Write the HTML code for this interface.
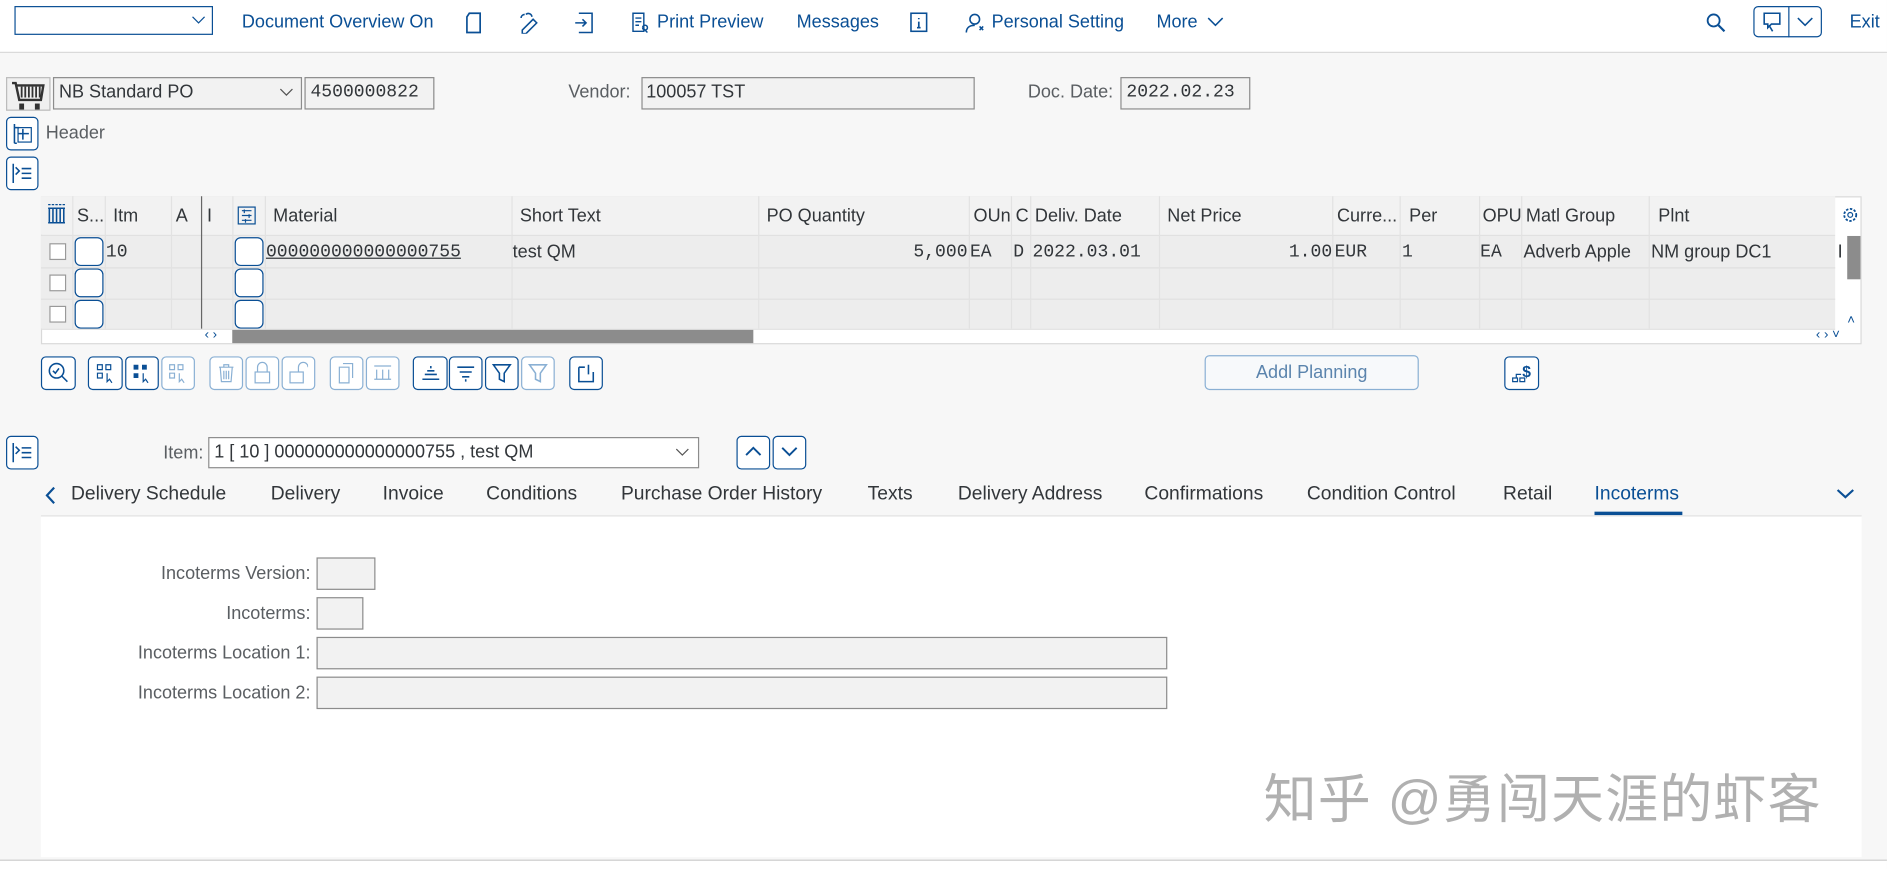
<!DOCTYPE html>
<html><head><meta charset="utf-8"><style>
html,body{margin:0;padding:0;width:1887px;height:868px;overflow:hidden;background:#f7f7f7;}
#w{position:absolute;left:0;top:0;width:1568px;height:721px;transform:scale(1.2034,1.2039);transform-origin:0 0;font-family:"Liberation Sans",sans-serif;font-size:15px;color:#32363a;}
.a{position:absolute;}
.lnk{color:#0a4f95;font-size:15px;}
.btn{position:absolute;border:1px solid #0a4f95;border-radius:4px;background:#fff;box-sizing:border-box;height:28px;}
.btnd{border-color:#8ab0d4;}
.fld{position:absolute;background:#f2f2f2;border:1px solid #8c8c8c;box-sizing:border-box;height:27px;}
.mono{font-family:"Liberation Mono",monospace;}
.lbl{position:absolute;color:#5a5e62;text-align:right;}
.th{position:absolute;top:171px;font-size:15px;}
.vl{position:absolute;top:163px;height:110px;border-left:1px solid #e2e2e2;}
.hl{position:absolute;left:34px;width:1491px;border-top:1px solid #e0e0e0;}
.cb{position:absolute;width:12px;height:12px;border:1px solid #999;background:#fff;left:41px;}
.sb{position:absolute;width:22px;height:22px;border:1px solid #0a4f95;border-radius:5px;background:#fff;}
.tab{position:absolute;top:402px;font-size:16px;color:#32363a;}
svg{position:absolute;}
</style></head><body><div id="w">
<!-- top bar -->
<div class="a" style="left:0;top:0;width:1568px;height:43px;background:#fff;border-bottom:1px solid #d9d9d9"></div>
<div class="a" style="left:12px;top:5px;width:165px;height:24px;border:1px solid #0a4f95;box-sizing:border-box;background:#fff"></div>
<svg style="left:159px;top:13px" width="12" height="8"><path d="M1 1l5 5 5-5" stroke="#0a4f95" fill="none"/></svg>
<div class="a lnk" style="left:201px;top:10px">Document Overview On</div>
<svg style="left:387px;top:10px" width="14" height="18"><path d="M3 1h9v16H1V4z" stroke="#0a4f95" fill="none" stroke-width="1.4"/></svg>
<svg style="left:431px;top:10px" width="18" height="18"><path d="M3 15l9-9 3 3-9 9H3zM6 2a3 3 0 0 1 5 2M2 5a3 3 0 0 1 3-3" stroke="#0a4f95" fill="none" stroke-width="1.3"/></svg>
<svg style="left:477px;top:10px" width="18" height="18"><path d="M4 1h11v16H4M1 9h9M7 6l3 3-3 3" stroke="#0a4f95" fill="none" stroke-width="1.3"/></svg>
<svg style="left:524px;top:10px" width="16" height="18"><path d="M2 1h9v15H2zM4 5h5M4 8h5M4 11h3M10 13a2 2 0 1 0 0-.1M11 14l3 3" stroke="#0a4f95" fill="none" stroke-width="1.2"/></svg>
<div class="a lnk" style="left:546px;top:10px">Print Preview</div>
<div class="a lnk" style="left:662px;top:10px">Messages</div>
<svg style="left:756px;top:10px" width="16" height="18"><rect x="1" y="1" width="13" height="15" stroke="#0a4f95" fill="none" stroke-width="1.3"/><path d="M7.5 5v1M7.5 8v5M6 13h3" stroke="#0a4f95" stroke-width="1.4"/></svg>
<svg style="left:801px;top:10px" width="20" height="18"><circle cx="9" cy="6" r="4" stroke="#0a4f95" fill="none" stroke-width="1.3"/><path d="M2 17c0-5 4-6 7-6M13 12l3 3M16 12l-3 3" stroke="#0a4f95" fill="none" stroke-width="1.3"/></svg>
<div class="a lnk" style="left:824px;top:10px">Personal Setting</div>
<div class="a lnk" style="left:961px;top:10px">More</div>
<svg style="left:1003px;top:14px" width="14" height="9"><path d="M1 1l6 6 6-6" stroke="#0a4f95" fill="none" stroke-width="1.3"/></svg>
<svg style="left:1417px;top:10px" width="18" height="18"><circle cx="7" cy="7" r="5" stroke="#0a4f95" fill="none" stroke-width="1.5"/><path d="M11 11l5 5" stroke="#0a4f95" stroke-width="1.8"/></svg>
<div class="a" style="left:1457px;top:5px;width:57px;height:26px;border:1px solid #0a4f95;border-radius:4px;box-sizing:border-box"></div>
<div class="a" style="left:1486px;top:5px;height:26px;border-left:1px solid #0a4f95"></div>
<svg style="left:1464px;top:9px" width="18" height="18"><path d="M2 2h13v9H8l-3 3v-3H2z" stroke="#0a4f95" fill="none" stroke-width="1.3"/><path d="M6 12l3 5" stroke="#0a4f95" stroke-width="1.3"/></svg>
<svg style="left:1493px;top:14px" width="14" height="9"><path d="M1 1l6 6 6-6" stroke="#0a4f95" fill="none" stroke-width="1.3"/></svg>
<div class="a lnk" style="left:1537px;top:10px">Exit</div>

<!-- header row -->
<div class="a" style="left:5px;top:64px;width:37px;height:28px;background:#f0f0f0;border:1px solid #bbb;box-sizing:border-box"></div>
<svg style="left:8px;top:66px" width="32" height="26"><path d="M2 3h3l3 14h18l2-12H6" stroke="#333" fill="none" stroke-width="2"/><path d="M10 6v9M13 6v9M16 6v9M19 6v9M22 6v9M25 6v9" stroke="#333" stroke-width="1.5"/><rect x="8" y="20" width="4" height="5" fill="#333"/><rect x="21" y="20" width="4" height="5" fill="#333"/></svg>
<div class="fld" style="left:44px;top:64px;width:207px;background:#f2f2f2"></div>
<div class="a" style="left:49px;top:68px">NB Standard PO</div>
<svg style="left:232px;top:73px" width="12" height="8"><path d="M1 1l5 5 5-5" stroke="#555" fill="none"/></svg>
<div class="fld" style="left:253px;top:64px;width:108px"></div>
<div class="a mono" style="left:258px;top:68px">4500000822</div>
<div class="lbl" style="left:400px;top:68px;width:124px">Vendor:</div>
<div class="fld" style="left:533px;top:64px;width:277px"></div>
<div class="a" style="left:537px;top:68px">100057 TST</div>
<div class="lbl" style="left:800px;top:68px;width:125px">Doc. Date:</div>
<div class="fld" style="left:931px;top:64px;width:108px"></div>
<div class="a mono" style="left:936px;top:68px">2022.02.23</div>

<div class="btn" style="left:5px;top:97px;width:27px"></div>
<svg style="left:9px;top:101px" width="20" height="20"><path d="M3 2v16M3 5h4M10 6v9M6 10h9M3 18h2" stroke="#0a4f95" fill="none" stroke-width="1.3"/><rect x="6" y="5" width="11" height="12" stroke="#0a4f95" fill="none"/></svg>
<div class="a" style="left:38px;top:102px;color:#5a5e62">Header</div>
<div class="btn" style="left:5px;top:130px;width:27px"></div>
<svg style="left:9px;top:134px" width="20" height="20"><path d="M2 2v16M4 5l3 3-3 3M9 6h8M9 10h8M9 14h8" stroke="#0a4f95" fill="none" stroke-width="1.3"/></svg>

<!-- table -->
<div class="a" style="left:34px;top:163px;width:1513px;height:123px;background:#fff;border:1px solid #d9d9d9;box-sizing:border-box"></div>
<div class="a" style="left:34px;top:163px;width:1491px;height:32px;background:#f2f2f2"></div>
<div class="a" style="left:34px;top:196px;width:1491px;height:77px;background:#ededed"></div>
<div class="hl" style="top:195px"></div><div class="hl" style="top:222px"></div><div class="hl" style="top:248px"></div><div class="hl" style="top:273px"></div>
<div class="vl" style="left:60px"></div><div class="vl" style="left:87px"></div><div class="vl" style="left:142px"></div><div class="vl" style="left:167px;border-color:#666"></div><div class="vl" style="left:193px"></div><div class="vl" style="left:220px"></div><div class="vl" style="left:425px"></div><div class="vl" style="left:630px"></div><div class="vl" style="left:805px"></div><div class="vl" style="left:840px"></div><div class="vl" style="left:856px"></div><div class="vl" style="left:963px"></div><div class="vl" style="left:1107px"></div><div class="vl" style="left:1163px"></div><div class="vl" style="left:1229px"></div><div class="vl" style="left:1264px"></div><div class="vl" style="left:1370px"></div>
<svg style="left:39px;top:169px" width="16" height="18"><path d="M1 1h14" stroke="#0a4f95" stroke-dasharray="2 1"/><path d="M2 4v12M5 4v12M8 4v12M11 4v12M14 4v12M1 16h14M1 4h14" stroke="#0a4f95" stroke-width="1.3"/></svg>
<div class="th" style="left:64px">S...</div><div class="th" style="left:94px">Itm</div><div class="th" style="left:146px">A</div><div class="th" style="left:172px">I</div>
<svg style="left:197px;top:171px" width="16" height="16"><rect x="1" y="1" width="14" height="14" stroke="#0a4f95" fill="none"/><path d="M4 4h8M4 8h8M4 12h8M6 3v3M10 7v3M7 11v3" stroke="#0a4f95"/></svg>
<div class="th" style="left:227px">Material</div><div class="th" style="left:432px">Short Text</div><div class="th" style="left:637px">PO Quantity</div><div class="th" style="left:809px">OUn</div><div class="th" style="left:844px">C</div><div class="th" style="left:860px">Deliv. Date</div><div class="th" style="left:970px">Net Price</div><div class="th" style="left:1111px">Curre...</div><div class="th" style="left:1171px">Per</div><div class="th" style="left:1232px">OPU</div><div class="th" style="left:1268px">Matl Group</div><div class="th" style="left:1378px">Plnt</div>
<svg style="left:1530px;top:171px" width="15" height="15"><circle cx="7.5" cy="7.5" r="5" stroke="#0a4f95" fill="none" stroke-width="1.5" stroke-dasharray="2 1.3"/><circle cx="7.5" cy="7.5" r="2" stroke="#0a4f95" fill="none"/></svg>
<div class="cb" style="top:202px"></div><div class="cb" style="top:228px"></div><div class="cb" style="top:254px"></div>
<div class="sb" style="left:62px;top:197px"></div><div class="sb" style="left:62px;top:223px"></div><div class="sb" style="left:62px;top:249px"></div>
<div class="sb" style="left:195px;top:197px"></div><div class="sb" style="left:195px;top:223px"></div><div class="sb" style="left:195px;top:249px"></div>
<div class="a mono" style="left:88px;top:201px">10</div>
<div class="a mono" style="left:221px;top:201px;text-decoration:underline">000000000000000755</div>
<div class="a" style="left:426px;top:201px">test QM</div>
<div class="a mono" style="left:700px;top:201px;width:104px;text-align:right">5,000</div>
<div class="a mono" style="left:806px;top:201px">EA</div>
<div class="a mono" style="left:842px;top:201px">D</div>
<div class="a mono" style="left:858px;top:201px">2022.03.01</div>
<div class="a mono" style="left:1000px;top:201px;width:107px;text-align:right">1.00</div>
<div class="a mono" style="left:1109px;top:201px">EUR</div>
<div class="a mono" style="left:1165px;top:201px">1</div>
<div class="a mono" style="left:1230px;top:201px">EA</div>
<div class="a" style="left:1266px;top:201px">Adverb Apple</div>
<div class="a" style="left:1372px;top:201px">NM group DC1</div>
<div class="a" style="left:1527px;top:201px">I</div>
<div class="a" style="left:1535px;top:196px;width:11px;height:36px;background:#8c8c8c"></div>
<div class="a" style="left:193px;top:274px;width:433px;height:11px;background:#8c8c8c"></div>
<div class="a" style="left:170px;top:272px;font-size:11px;color:#0a4f95">‹ ›</div>
<div class="a" style="left:1509px;top:272px;font-size:11px;color:#0a4f95">‹ › ˅</div>
<div class="a" style="left:1535px;top:260px;font-size:11px;color:#0a4f95">˄</div>

<!-- toolbar -->
<div class="btn" style="left:34px;top:296px;width:29px"></div>
<div class="btn" style="left:73px;top:296px;width:29px"></div><div class="btn" style="left:104px;top:296px;width:28px"></div><div class="btn btnd" style="left:134px;top:296px;width:28px"></div>
<div class="btn btnd" style="left:174px;top:296px;width:28px"></div><div class="btn btnd" style="left:204px;top:296px;width:28px"></div><div class="btn btnd" style="left:234px;top:296px;width:28px"></div>
<div class="btn btnd" style="left:274px;top:296px;width:28px"></div><div class="btn btnd" style="left:304px;top:296px;width:28px"></div>
<div class="btn" style="left:343px;top:296px;width:29px"></div><div class="btn" style="left:373px;top:296px;width:28px"></div><div class="btn" style="left:403px;top:296px;width:28px"></div><div class="btn btnd" style="left:433px;top:296px;width:28px"></div>
<div class="btn" style="left:473px;top:296px;width:28px"></div>
<svg style="left:39px;top:300px" width="20" height="20"><circle cx="8" cy="8" r="6" stroke="#0a4f95" fill="none" stroke-width="1.3"/><path d="M5 8l2 2 3-4M12 12l5 5" stroke="#0a4f95" fill="none" stroke-width="1.3"/></svg>
<svg style="left:79px;top:301px" width="18" height="18"><path d="M2 2h4v4H2zM9 2h4v4H9zM2 9h4v4H2z" stroke="#0a4f95" fill="none"/><path d="M10 9v7l2-2 2 3" stroke="#0a4f95" fill="none"/></svg>
<svg style="left:109px;top:301px" width="18" height="18"><path d="M2 2h4v4H2zM9 2h4v4H9zM2 9h4v4H2z" fill="#0a4f95"/><path d="M10 9v7l2-2 2 3" stroke="#0a4f95" fill="none"/></svg>
<svg style="left:139px;top:301px" width="18" height="18"><path d="M2 2h4v4H2zM9 2h4v4H9zM2 9h4v4H2z" stroke="#8ab0d4" fill="none"/><path d="M10 9v7l2-2 2 3" stroke="#8ab0d4" fill="none"/></svg>
<svg style="left:180px;top:301px" width="16" height="18"><path d="M2 4h12M6 4V2h4v2M3 4l1 12h8l1-12M6 7v7M8 7v7M10 7v7" stroke="#8ab0d4" fill="none"/></svg>
<svg style="left:210px;top:300px" width="16" height="20"><path d="M4 9V5a4 4 0 0 1 8 0v4" stroke="#8ab0d4" fill="none"/><rect x="2" y="9" width="12" height="9" stroke="#8ab0d4" fill="none"/></svg>
<svg style="left:240px;top:300px" width="16" height="20"><path d="M8 9V5a4 4 0 0 1 8 0" stroke="#8ab0d4" fill="none"/><rect x="1" y="9" width="11" height="9" stroke="#8ab0d4" fill="none"/></svg>
<svg style="left:280px;top:300px" width="16" height="20"><path d="M5 2h8v12M2 5h8v13H2z" stroke="#8ab0d4" fill="none"/></svg>
<svg style="left:309px;top:301px" width="18" height="18"><path d="M2 3h14M2 14h14M4 6v8M9 6v8M14 6v8" stroke="#8ab0d4" fill="none"/></svg>
<svg style="left:349px;top:301px" width="18" height="18"><path d="M9 3v2M6 7h6M4 10h10M2 14h14" stroke="#0a4f95" fill="none" stroke-width="1.3"/></svg>
<svg style="left:378px;top:301px" width="18" height="18"><path d="M2 4h14M4 8h10M6 12h6M9 14v2" stroke="#0a4f95" fill="none" stroke-width="1.3"/></svg>
<svg style="left:408px;top:301px" width="18" height="18"><path d="M2 2h14l-5 7v7l-4-2V9z" stroke="#0a4f95" fill="none" stroke-width="1.3"/></svg>
<svg style="left:438px;top:301px" width="18" height="18"><path d="M2 2h14l-5 7v7l-4-2V9z" stroke="#8ab0d4" fill="none" stroke-width="1.3"/></svg>
<svg style="left:478px;top:301px" width="18" height="18"><path d="M3 4h5M3 4v12h12V8M11 2v8" stroke="#0a4f95" fill="none" stroke-width="1.3"/></svg>
<div class="a" style="left:1001px;top:295px;width:178px;height:29px;border:1px solid #8ab0d4;border-radius:4px;box-sizing:border-box;background:#f7f9fb;text-align:center;line-height:27px;color:#5b84ad">Addl Planning</div>
<div class="btn" style="left:1250px;top:296px;width:29px"></div>
<svg style="left:1254px;top:300px" width="22" height="20"><path d="M3 17h4v-3H3zM9 17h4v-3H9zM6 14v-3h4" stroke="#0a4f95" fill="none"/><text x="11" y="13" font-size="13" font-weight="bold" fill="#0a4f95" font-family="Liberation Sans">$</text></svg>

<!-- item row -->
<div class="btn" style="left:5px;top:362px;width:27px"></div>
<svg style="left:9px;top:366px" width="20" height="20"><path d="M2 2v16M4 5l3 3-3 3M9 6h8M9 10h8M9 14h8" stroke="#0a4f95" fill="none" stroke-width="1.3"/></svg>
<div class="lbl" style="left:100px;top:368px;width:69px">Item:</div>
<div class="a" style="left:173px;top:363px;width:408px;height:26px;border:1px solid #8c8c8c;box-sizing:border-box;background:#fff"></div>
<div class="a" style="left:178px;top:367px">1 [ 10 ] 000000000000000755 , test QM</div>
<svg style="left:561px;top:372px" width="12" height="8"><path d="M1 1l5 5 5-5" stroke="#555" fill="none"/></svg>
<div class="btn" style="left:612px;top:362px;width:28px"></div><div class="btn" style="left:642px;top:362px;width:28px"></div>
<svg style="left:619px;top:370px" width="14" height="10"><path d="M1 8l6-6 6 6" stroke="#0a4f95" fill="none" stroke-width="1.6"/></svg>
<svg style="left:649px;top:370px" width="14" height="10"><path d="M1 2l6 6 6-6" stroke="#0a4f95" fill="none" stroke-width="1.6"/></svg>

<!-- tabs -->
<svg style="left:37px;top:404px" width="10" height="15"><path d="M8 1L2 7.5 8 14" stroke="#0a4f95" fill="none" stroke-width="1.8"/></svg>
<div class="tab" style="left:59px">Delivery Schedule</div><div class="tab" style="left:225px">Delivery</div><div class="tab" style="left:318px">Invoice</div><div class="tab" style="left:404px">Conditions</div><div class="tab" style="left:516px">Purchase Order History</div><div class="tab" style="left:721px">Texts</div><div class="tab" style="left:796px">Delivery Address</div><div class="tab" style="left:951px">Confirmations</div><div class="tab" style="left:1086px">Condition Control</div><div class="tab" style="left:1249px">Retail</div><div class="tab" style="left:1325px;color:#0a4f95">Incoterms</div>
<div class="a" style="left:1325px;top:425px;width:73px;height:3px;background:#0a4f95"></div>
<svg style="left:1526px;top:405px" width="15" height="10"><path d="M1 2l6.5 6L14 2" stroke="#0a4f95" fill="none" stroke-width="1.8"/></svg>
<div class="a" style="left:34px;top:428px;width:1513px;height:283px;background:#fff;border-top:1px solid #e0e0e0"></div>

<div class="lbl" style="left:60px;top:468px;width:198px">Incoterms Version:</div>
<div class="lbl" style="left:60px;top:501px;width:198px">Incoterms:</div>
<div class="lbl" style="left:60px;top:534px;width:198px">Incoterms Location 1:</div>
<div class="lbl" style="left:60px;top:567px;width:198px">Incoterms Location 2:</div>
<div class="fld" style="left:263px;top:463px;width:49px"></div>
<div class="fld" style="left:263px;top:496px;width:39px"></div>
<div class="fld" style="left:263px;top:529px;width:707px"></div>
<div class="fld" style="left:263px;top:562px;width:707px"></div>

<div class="a" style="left:1050px;top:628px;font-size:44px;color:rgba(150,150,150,0.75);font-family:'Liberation Sans','Noto Sans CJK SC',sans-serif;letter-spacing:1px;white-space:nowrap">知乎 @勇闯天涯的虾客</div>
<div class="a" style="left:0;top:714px;width:1568px;height:7px;background:#fff;border-top:1px solid #ccc"></div>
</div></body></html>
